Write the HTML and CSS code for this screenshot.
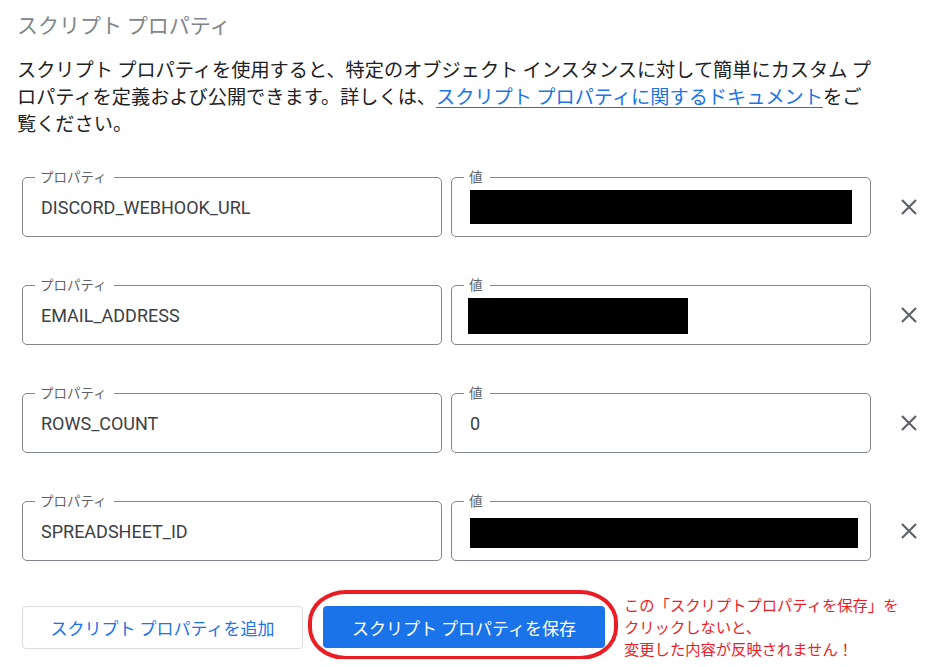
FILE: index.html
```html
<!DOCTYPE html>
<html lang="ja">
<head>
<meta charset="utf-8">
<title>スクリプト プロパティ</title>
<link rel="stylesheet" href="styles.css">
</head>
<body>
<main class="page">
  <h1 class="title">スクリプト プロパティ</h1>
  <p class="desc">スクリプト プロパティを使用すると、特定のオブジェクト インスタンスに対して簡単にカスタム プ<br>ロパティを定義および公開できます。詳しくは、<a class="link" href="#">スクリプト プロパティに関するドキュメント</a>をご<br>覧ください。</p>

  <div class="props">
    <div class="prop-row">
      <div class="field"><span class="field-label">プロパティ</span><span class="field-value">DISCORD_WEBHOOK_URL</span></div>
      <div class="field"><span class="field-label">値</span><span class="redact redact-1"></span></div>
      <button class="remove" aria-label="削除"><svg viewBox="0 0 16 16" width="16" height="16"><path d="M1 1 L15 15 M15 1 L1 15" stroke="#5f6368" stroke-width="2.2" fill="none"/></svg></button>
    </div>
    <div class="prop-row">
      <div class="field"><span class="field-label">プロパティ</span><span class="field-value">EMAIL_ADDRESS</span></div>
      <div class="field"><span class="field-label">値</span><span class="redact redact-2"></span></div>
      <button class="remove" aria-label="削除"><svg viewBox="0 0 16 16" width="16" height="16"><path d="M1 1 L15 15 M15 1 L1 15" stroke="#5f6368" stroke-width="2.2" fill="none"/></svg></button>
    </div>
    <div class="prop-row">
      <div class="field"><span class="field-label">プロパティ</span><span class="field-value">ROWS_COUNT</span></div>
      <div class="field"><span class="field-label">値</span><span class="field-value">0</span></div>
      <button class="remove" aria-label="削除"><svg viewBox="0 0 16 16" width="16" height="16"><path d="M1 1 L15 15 M15 1 L1 15" stroke="#5f6368" stroke-width="2.2" fill="none"/></svg></button>
    </div>
    <div class="prop-row">
      <div class="field"><span class="field-label">プロパティ</span><span class="field-value">SPREADSHEET_ID</span></div>
      <div class="field"><span class="field-label">値</span><span class="redact redact-4"></span></div>
      <button class="remove" aria-label="削除"><svg viewBox="0 0 16 16" width="16" height="16"><path d="M1 1 L15 15 M15 1 L1 15" stroke="#5f6368" stroke-width="2.2" fill="none"/></svg></button>
    </div>
  </div>

  <div class="actions">
    <button class="btn btn-outline">スクリプト プロパティを追加</button>
    <div class="save-wrap">
      <button class="btn btn-primary">スクリプト プロパティを保存</button>
      <span class="annot-ring"></span>
    </div>
    <p class="note">この「スクリプトプロパティを保存」を<br>クリックしないと、<br>変更した内容が反映されません！</p>
  </div>
</main>
</body>
</html>
```

FILE: styles.css
```css
* { box-sizing: border-box; }

html, body {
  margin: 0;
  padding: 0;
  background: #ffffff;
}

body {
  font-family: "Noto Sans CJK JP", "Noto Sans", sans-serif;
  color: #202124;
}

.page {
  padding: 10px 0 0 17px;
}

.title {
  margin: 0;
  font-size: 21px;
  line-height: 28px;
  font-weight: 400;
  color: #80868b;
}

.desc {
  margin: 18px 0 0;
  font-size: 19.2px;
  line-height: 27px;
  color: #202124;
  white-space: nowrap;
}

.link {
  color: #1a73e8;
  text-decoration: underline;
  text-underline-offset: 3px;
}

.props {
  margin: 40px 0 0 5px;
  display: flex;
  flex-direction: column;
  gap: 48px;
}

.prop-row {
  display: flex;
  align-items: center;
  gap: 9px;
}

.field {
  position: relative;
  width: 420px;
  height: 60px;
  border: 1px solid #80868b;
  border-radius: 5px;
  display: flex;
  align-items: center;
  padding: 0 18px;
}

.field-label {
  position: absolute;
  left: 12px;
  top: -10px;
  padding: 0 7px 0 5px;
  background: #ffffff;
  font-size: 13.5px;
  line-height: 16px;
  color: #5f6368;
}

.field-value {
  font-family: Roboto, "Liberation Sans", sans-serif;
  font-size: 18px;
  color: #3c4043;
  margin-top: 1px;
}

.redact {
  display: block;
  flex: none;
  background: #000000;
}

.redact-1 { width: 382px; height: 34px; }
.redact-2 { width: 220px; height: 36px; margin-left: -2px; margin-top: 1px; }
.redact-4 { width: 388px; height: 30px; margin-top: 3px; }

.remove {
  margin-left: 17px;
  width: 24px;
  height: 24px;
  padding: 4px;
  border: 0;
  background: transparent;
  display: flex;
  align-items: center;
  justify-content: center;
}

.remove svg { display: block; flex: none; }

.actions {
  margin: 45px 0 0 5px;
  display: flex;
  align-items: flex-start;
  gap: 20px;
}

.btn {
  font-family: "Noto Sans CJK JP", sans-serif;
  font-size: 17px;
  border-radius: 4px;
  width: 281px;
  height: 43px;
  display: flex;
  align-items: center;
  justify-content: center;
  padding: 0;
}

.btn-outline {
  background: #ffffff;
  color: #1a73e8;
  border: 1px solid #dadce0;
}

.btn-primary {
  width: 282px;
  height: 42px;
  background: #1a73e8;
  color: #ffffff;
  border: 0;
}

.save-wrap {
  position: relative;
}

.annot-ring {
  position: absolute;
  left: -15px;
  right: -13px;
  top: -16px;
  bottom: -12px;
  border: 4px solid #ec1c24;
  border-radius: 38px / 32px;
  pointer-events: none;
}

.note {
  margin: -13px 0 0 -1px;
  font-size: 15.3px;
  line-height: 22px;
  color: #ee1c25;
  white-space: nowrap;
}
```
